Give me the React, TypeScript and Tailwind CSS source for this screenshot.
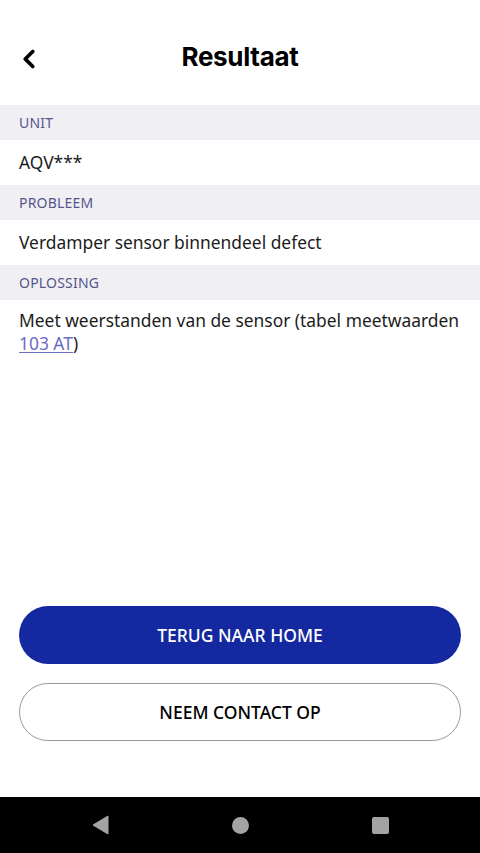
import { ChevronLeft } from "lucide-react";

const Label = ({ children }: { children: string }) => (
  <div className="h-[35px] bg-[#efeff4] px-[19px] flex items-center text-[14px] text-[#56568a] tracking-[0.2px]">
    {children}
  </div>
);

const Value = ({ children }: { children: string }) => (
  <div className="h-[45px] px-[19px] flex items-center text-[17.4px] text-[#1c1c1c]">
    {children}
  </div>
);

export default function App() {
  return (
    <div
      className="w-[480px] h-[853px] bg-white flex flex-col"
      style={{ fontFamily: '"Noto Sans", "Open Sans", sans-serif' }}
    >
      <header className="h-[105px] relative flex items-center justify-center">
        <button className="absolute left-[14px] top-[44px] text-black">
          <ChevronLeft size={30} strokeWidth={3} />
        </button>
        <h1
          className="text-[26px] font-bold text-black tracking-[-0.3px] pt-[8px]"
          style={{ fontFamily: 'Inter, "Noto Sans", sans-serif' }}
        >
          Resultaat
        </h1>
      </header>

      <Label>UNIT</Label>
      <Value>AQV***</Value>
      <Label>PROBLEEM</Label>
      <Value>Verdamper sensor binnendeel defect</Value>
      <Label>OPLOSSING</Label>
      <p className="pl-[19px] pr-[10px] pt-[9px] text-[17.4px] leading-[23px] text-[#1c1c1c]">
        Meet weerstanden van de sensor (tabel meetwaarden{" "}
        <a className="text-[#6b6bc8] underline underline-offset-2">103 AT</a>)
      </p>

      <div className="flex-1" />

      <div className="px-[19px] flex flex-col gap-[19px] pb-[56px]">
        <button className="h-[58px] rounded-full bg-[#1428a0] text-white text-[17.5px] font-medium">
          TERUG NAAR HOME
        </button>
        <button className="h-[58px] rounded-full border border-[#9a9a9a] bg-white text-black text-[17.5px] font-medium">
          NEEM CONTACT OP
        </button>
      </div>

      <nav className="h-[56px] bg-black flex items-center pl-[92px] gap-[123px]">
        <svg width="17" height="20" viewBox="0 0 17 20">
          <path d="M16 1 L1 10 L16 19 Z" fill="#a3a3a3" stroke="#a3a3a3" strokeLinejoin="round" />
        </svg>
        <div className="w-[17px] h-[17px] rounded-full bg-[#a3a3a3]" />
        <div className="w-[17px] h-[17px] rounded-[2px] bg-[#a3a3a3]" />
      </nav>
    </div>
  );
}
